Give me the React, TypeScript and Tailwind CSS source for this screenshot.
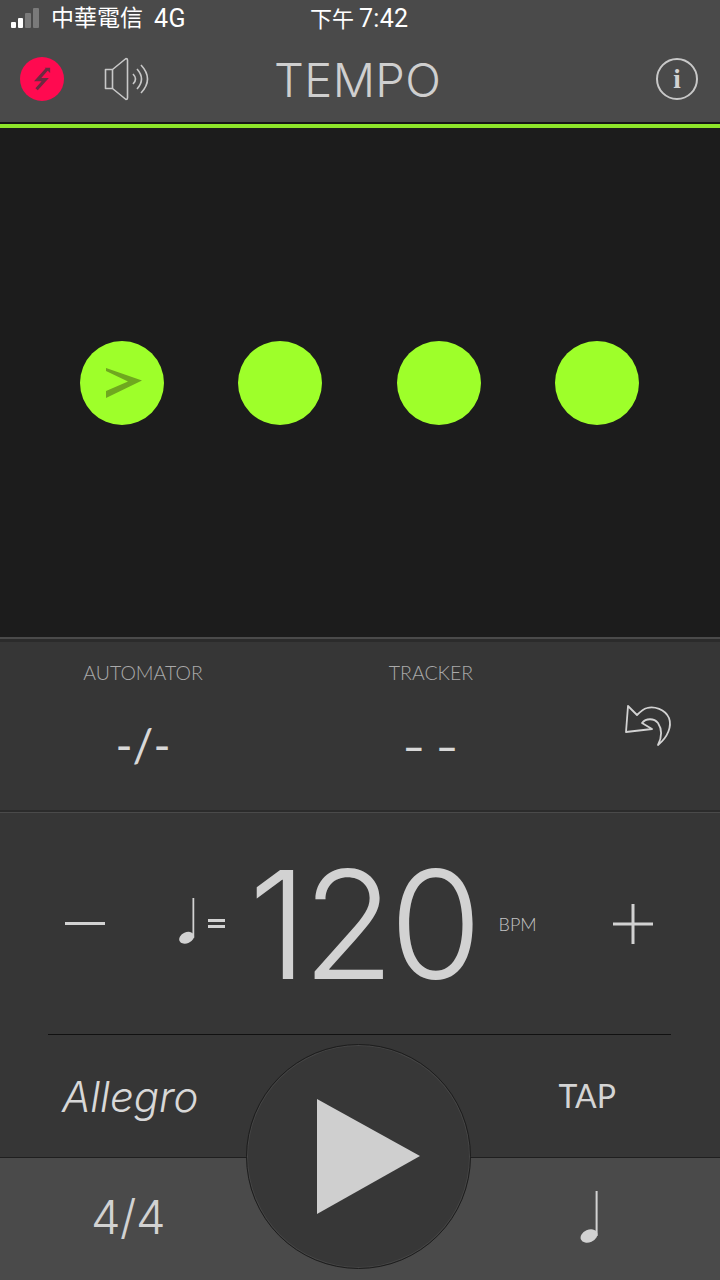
import React from "react";

const LATO = "font-['Lato','Liberation_Sans',sans-serif]";

function Note({ className }: { className: string }) {
  return (
    <svg viewBox="0 0 22 52" className={className} fill="#d2d2d2">
      <rect x="18.600" y="0" width="2" height="45" />
      <ellipse cx="12" cy="45" rx="8.800" ry="6.200" transform="rotate(-24 12 45)" />
    </svg>
  );
}

function Beat({ accent }: { accent?: boolean }) {
  return (
    <div className="flex h-[84px] w-[84px] items-center justify-center rounded-full bg-[#9eff2a]">
      {accent && (
        <svg viewBox="0 0 38 32" className="ml-[4px] h-[32px] w-[38px]">
          <polygon points="1,1 37,13.500 1,31 1,24 23,14.500 1,4" fill="#6fa81f" />
        </svg>
      )}
    </div>
  );
}

export default function App() {
  return (
    <div className={`relative h-[1280px] w-[720px] overflow-hidden bg-[#1c1c1c] text-[#d2d2d2] ${LATO}`}>
      {/* header */}
      <header className="h-[122px] bg-[#4a4a4a]">
        <div className="flex h-[36px] items-center pl-[11px] font-['Roboto','Noto_Sans_CJK_TC',sans-serif] text-[23px] leading-none text-white">
          <div className="flex h-[20px] w-[32px] items-end gap-[2px]">
            <span className="h-[6px] w-[5px] rounded-[1px] bg-white" />
            <span className="h-[10px] w-[5px] rounded-[1px] bg-white" />
            <span className="h-[15px] w-[6px] rounded-[1px] bg-[#7a7a7a]" />
            <span className="h-[20px] w-[6px] rounded-[1px] bg-[#7a7a7a]" />
          </div>
          <span className="ml-[8px] mt-[-3px] w-[103px] font-['Noto_Sans_CJK_TC',sans-serif]">中華電信</span>
          <span className="w-[156px] text-[25px] tracking-[0.5px]">4G</span>
          <span className="mt-[-3px] font-['Noto_Sans_CJK_TC',sans-serif] text-[22px]">下午</span>
          <span className="ml-[5px] text-[25px] tracking-[0.3px]">7:42</span>
        </div>
        <div className="flex h-[86px] items-center pl-[20px]">
          <div className="flex h-[44px] w-[44px] items-center justify-center rounded-full bg-[#ff0a50]">
            <svg viewBox="0 0 24 24" className="h-[26px] w-[26px]">
              <path d="M16.500 3 8 12.500h7L7 21.500" fill="none" stroke="#6c2a40" strokeWidth="3" />
              <path d="M14.500 1.500h5v5z" fill="#6c2a40" />
            </svg>
          </div>
          <svg viewBox="0 0 46 44" className="ml-[40px] h-[44px] w-[46px]" fill="none" stroke="#c8c8c8" strokeWidth="1.600">
            <path d="M1.500 12.500h7L22 1.500q1.500 0 1.500 1.500v38q0 1.500-1.500 1.500L8.500 31.500h-7z" strokeLinejoin="round" />
            <path d="M8.500 12.500v19" />
            <path d="M29 17q5 5 0 10" />
            <path d="M33 12q9 10 0 20" />
            <path d="M37 8q13 14 0 28" />
          </svg>
          <h1 className="ml-[124px] mt-[1px] font-['Inter',sans-serif] text-[47px] font-light leading-none tracking-[0.4px] text-[#cfcfcf]">TEMPO</h1>
          <div className="ml-auto mr-[22px] flex h-[42px] w-[42px] items-center justify-center rounded-full border-[2px] border-[#c8c8c8] font-['Liberation_Serif',serif] text-[27px] font-bold leading-none">
            i
          </div>
        </div>
      </header>
      <div className="h-[2px] bg-[#161616]" />
      <div className="h-[4px] bg-[#8ee52a]" />

      {/* beats */}
      <main className="flex h-[509px] items-center justify-between bg-[#1c1c1c] pl-[80px] pr-[81px]">
        <Beat accent />
        <Beat />
        <Beat />
        <Beat />
      </main>
      <div className="h-[2px] bg-[#4a4a4a]" />
      <div className="h-[3px] bg-[#2b2b2b]" />

      {/* automator */}
      <section className="grid h-[168px] grid-cols-[286px_290px_1fr] bg-[#363636]">
        <div className="flex flex-col items-center pt-[19px]">
          <span className="text-[19.500px] font-light leading-[24px] text-[#aaaaaa]">AUTOMATOR</span>
          <span className="mt-[32px] text-[46px] font-normal leading-[56px] text-[#d8d8d8]">-/-</span>
        </div>
        <div className="flex flex-col items-center pt-[19px]">
          <span className="text-[19.500px] font-light leading-[24px] text-[#aaaaaa]">TRACKER</span>
          <span className="mt-[33px] text-[38px] font-bold leading-[56px] tracking-[1px] text-[#d8d8d8]">– –</span>
        </div>
        <div className="flex justify-center pt-[62px]">
          <svg viewBox="0 0 50 45" className="ml-[2px] h-[45px] w-[50px]" fill="none" stroke="#d2d2d2" strokeWidth="1.800" strokeLinejoin="round">
            <path d="M4 2 2 28l26-3-10-6c4-5 12-5 16 0 4 6 4 14 0 22 10-8 14-19 11-27-4-9-15-12-22-10-4 1-7 4-10 7z" />
          </svg>
        </div>
      </section>
      <div className="h-[2px] bg-[#2b2b2b]" />
      <div className="h-[1px] bg-[#4a4a4a]" />

      {/* bpm */}
      <section className="h-[344px] bg-[#363636]">
        <div className="flex h-[221px] items-center pl-[65px]">
          <span className="block h-[3px] w-[40px] bg-[#d2d2d2]" />
          <Note className="ml-[71px] mt-[-6px] h-[46px] w-[19.500px]" />
          <span className="ml-[12px] flex w-[17px] flex-col gap-[3px]">
            <span className="block h-[3px] bg-[#d2d2d2]" />
            <span className="block h-[3px] bg-[#d2d2d2]" />
          </span>
          <span className="ml-[24px] mt-[2px] w-[235px] font-['Inter',sans-serif] text-[150px] font-light leading-none tracking-[-5px] text-[#d2d2d2]">120</span>
          <span className="ml-[15px] w-[39px] text-[18px] font-light leading-none text-[#c4c4c4]">BPM</span>
          <svg viewBox="0 0 40 40" className="ml-[75px] h-[40px] w-[40px]" fill="#d2d2d2">
            <rect x="0" y="18.500" width="40" height="3" />
            <rect x="18.500" y="0" width="3" height="40" />
          </svg>
        </div>
        <div className="ml-[48px] h-[1px] w-[623px] bg-[#111111]" />
        <div className="flex h-[122px] items-start pl-[62px] pt-[39px]">
          <span className="font-['Inter',sans-serif] text-[42px] font-light italic leading-[46px] text-[#d8d8d8]">Allegro</span>
          <span className="ml-auto mr-[104px] mt-[2px] text-[32px] font-normal leading-[40px] text-[#d4d4d4]">TAP</span>
        </div>
      </section>
      <div className="h-[1px] bg-[#1f1f1f]" />

      {/* bottom */}
      <footer className="flex h-[122px] items-center bg-[#4a4a4a] pl-[91px]">
        <span className="mt-[-6px] w-[75px] font-['Inter',sans-serif] text-[47px] font-light leading-none tracking-[-0.5px] text-[#d2d2d2]">4/4</span>
        <Note className="ml-[411px] mt-[-5px] h-[52px] w-[22px]" />
      </footer>

      {/* play button overlays both lower panels */}
      <button className="absolute left-[246px] top-[1044px] flex h-[225px] w-[225px] items-center justify-center rounded-full border-[1.500px] border-[#1d1d1d] bg-[#373737] shadow-[inset_0_0_0_1px_#454545]">
        <svg viewBox="0 0 104 116" className="ml-[18px] h-[116px] w-[104px]">
          <polygon points="1,0 104,57 1,115" fill="#cfcfcf" />
        </svg>
      </button>
    </div>
  );
}
